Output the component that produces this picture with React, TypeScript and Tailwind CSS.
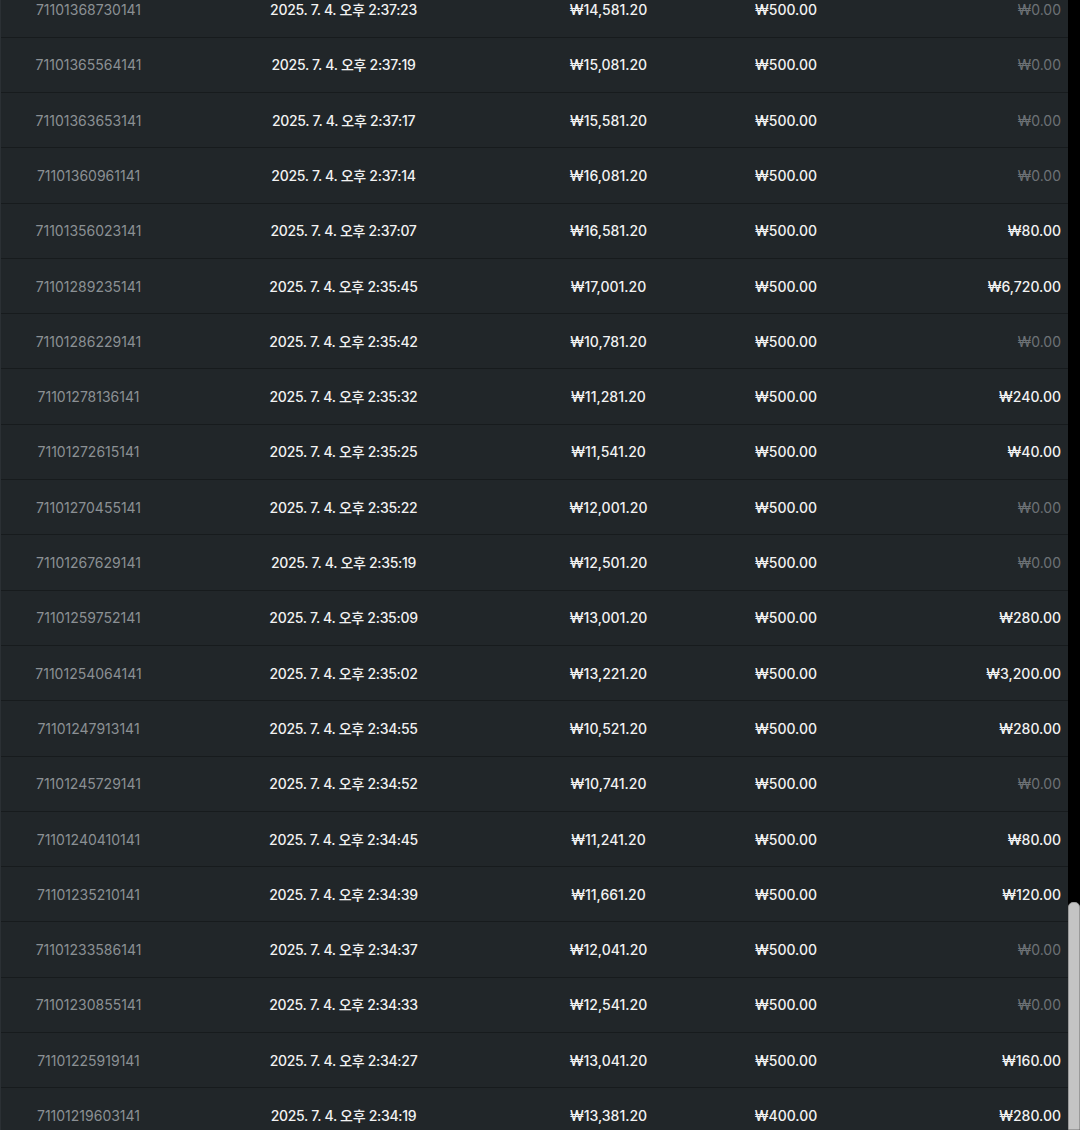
import React from "react";

type Row = [string, string, string, string, string];

const rows: Row[] = [
  ["71101368730141", "2025. 7. 4. 오후 2:37:23", "₩14,581.20", "₩500.00", "₩0.00"],
  ["71101365564141", "2025. 7. 4. 오후 2:37:19", "₩15,081.20", "₩500.00", "₩0.00"],
  ["71101363653141", "2025. 7. 4. 오후 2:37:17", "₩15,581.20", "₩500.00", "₩0.00"],
  ["71101360961141", "2025. 7. 4. 오후 2:37:14", "₩16,081.20", "₩500.00", "₩0.00"],
  ["71101356023141", "2025. 7. 4. 오후 2:37:07", "₩16,581.20", "₩500.00", "₩80.00"],
  ["71101289235141", "2025. 7. 4. 오후 2:35:45", "₩17,001.20", "₩500.00", "₩6,720.00"],
  ["71101286229141", "2025. 7. 4. 오후 2:35:42", "₩10,781.20", "₩500.00", "₩0.00"],
  ["71101278136141", "2025. 7. 4. 오후 2:35:32", "₩11,281.20", "₩500.00", "₩240.00"],
  ["71101272615141", "2025. 7. 4. 오후 2:35:25", "₩11,541.20", "₩500.00", "₩40.00"],
  ["71101270455141", "2025. 7. 4. 오후 2:35:22", "₩12,001.20", "₩500.00", "₩0.00"],
  ["71101267629141", "2025. 7. 4. 오후 2:35:19", "₩12,501.20", "₩500.00", "₩0.00"],
  ["71101259752141", "2025. 7. 4. 오후 2:35:09", "₩13,001.20", "₩500.00", "₩280.00"],
  ["71101254064141", "2025. 7. 4. 오후 2:35:02", "₩13,221.20", "₩500.00", "₩3,200.00"],
  ["71101247913141", "2025. 7. 4. 오후 2:34:55", "₩10,521.20", "₩500.00", "₩280.00"],
  ["71101245729141", "2025. 7. 4. 오후 2:34:52", "₩10,741.20", "₩500.00", "₩0.00"],
  ["71101240410141", "2025. 7. 4. 오후 2:34:45", "₩11,241.20", "₩500.00", "₩80.00"],
  ["71101235210141", "2025. 7. 4. 오후 2:34:39", "₩11,661.20", "₩500.00", "₩120.00"],
  ["71101233586141", "2025. 7. 4. 오후 2:34:37", "₩12,041.20", "₩500.00", "₩0.00"],
  ["71101230855141", "2025. 7. 4. 오후 2:34:33", "₩12,541.20", "₩500.00", "₩0.00"],
  ["71101225919141", "2025. 7. 4. 오후 2:34:27", "₩13,041.20", "₩500.00", "₩160.00"],
  ["71101219603141", "2025. 7. 4. 오후 2:34:19", "₩13,381.20", "₩400.00", "₩280.00"],
];

export default function App() {
  return (
    <div className="flex h-[1130px] w-[1080px] overflow-hidden bg-black">
      <div className="h-full w-[1068px] overflow-hidden bg-[#212629] font-['Inter','Noto_Sans_CJK_KR',sans-serif] text-[14px]">
        <div className="-mt-[17.6px] border-l border-[#2b3034]">
          {rows.map((r, i) => {
            const zero = r[4] === "₩0.00";
            return (
              <div
                key={i}
                className="grid h-[55.3px] grid-cols-[175px_335px_195px_160px_1fr] items-center border-b border-[#171b1d]"
              >
                <div className="text-center font-normal text-[#8b9094]">{r[0]}</div>
                <div className="text-center font-medium tracking-[-0.3px] text-[#f2f2f2]">{r[1]}</div>
                <div className="text-center font-medium text-[#f2f2f2]">{r[2]}</div>
                <div className="text-center font-medium text-[#f2f2f2]">{r[3]}</div>
                <div
                  className={
                    zero
                      ? "pr-[7px] text-right font-normal text-[#6d7276]"
                      : "pr-[7px] text-right font-medium text-[#f2f2f2]"
                  }
                >
                  {r[4]}
                </div>
              </div>
            );
          })}
        </div>
      </div>
      <div className="flex h-full w-[12px] flex-col bg-black">
        <div className="h-[902px] shrink-0" />
        <div className="flex-1 rounded-t-[5px] border border-[#9a9a9a] bg-[#c4c4c4]" />
      </div>
    </div>
  );
}
